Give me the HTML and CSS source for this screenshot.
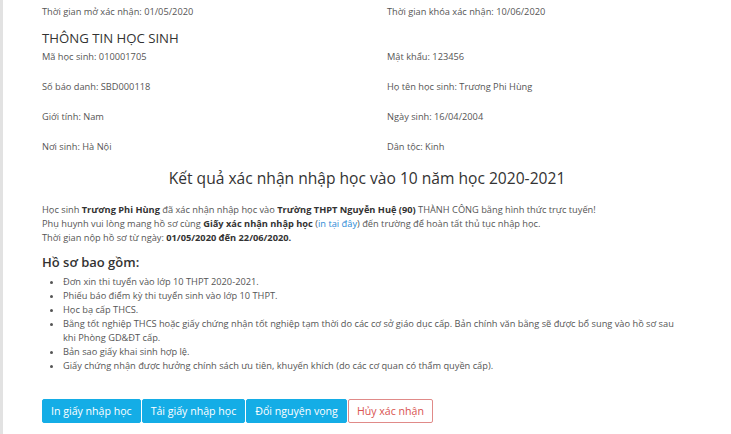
FILE: index.html
```html
<!DOCTYPE html>
<html lang="vi">
<head>
<meta charset="utf-8">
<title>Kết quả xác nhận nhập học</title>
<link rel="stylesheet" href="styles.css">
</head>
<body>
<div class="page">
  <div class="content">
    <div class="info">
      <div class="cell row-top">Thời gian mở xác nhận: 01/05/2020</div>
      <div class="cell row-top">Thời gian khóa xác nhận: 10/06/2020</div>
      <h2 class="section-title">THÔNG TIN HỌC SINH</h2>
      <div class="spacer"></div>
      <div class="cell">Mã học sinh: 010001705</div>
      <div class="cell">Mật khẩu: 123456</div>
      <div class="cell">Số báo danh: SBD000118</div>
      <div class="cell">Họ tên học sinh: Trương Phi Hùng</div>
      <div class="cell">Giới tính: Nam</div>
      <div class="cell">Ngày sinh: 16/04/2004</div>
      <div class="cell">Nơi sinh: Hà Nội</div>
      <div class="cell">Dân tộc: Kinh</div>
    </div>
    <h1 class="result-title">Kết quả xác nhận nhập học vào 10 năm học 2020-2021</h1>
    <div class="message">
      <p>Học sinh <b>Trương Phi Hùng</b> đã xác nhận nhập học vào <b>Trường THPT Nguyễn Huệ (90)</b> THÀNH CÔNG bằng hình thức trực tuyến!</p>
      <p>Phụ huynh vui lòng mang hồ sơ cùng <b>Giấy xác nhận nhập học</b> (<a href="#" class="link">in tại đây</a>) đến trường để hoàn tất thủ tục nhập học.</p>
      <p>Thời gian nộp hồ sơ từ ngày: <b>01/05/2020 đến 22/06/2020.</b></p>
    </div>
    <h3 class="docs-title">Hồ sơ bao gồm:</h3>
    <ul class="docs">
      <li>Đơn xin thi tuyển vào lớp 10 THPT 2020-2021.</li>
      <li>Phiếu báo điểm kỳ thi tuyển sinh vào lớp 10 THPT.</li>
      <li>Học bạ cấp THCS.</li>
      <li>Bằng tốt nghiệp THCS hoặc giấy chứng nhận tốt nghiệp tạm thời do các cơ sở giáo dục cấp. Bản chính văn bằng sẽ được bổ sung vào hồ sơ sau khi Phòng GD&amp;ĐT cấp.</li>
      <li>Bản sao giấy khai sinh hợp lệ.</li>
      <li>Giấy chứng nhận được hưởng chính sách ưu tiên, khuyến khích (do các cơ quan có thẩm quyền cấp).</li>
    </ul>
    <div class="actions">
      <button class="btn btn-info">In giấy nhập học</button>
      <button class="btn btn-info">Tải giấy nhập học</button>
      <button class="btn btn-info">Đổi nguyện vọng</button>
      <button class="btn btn-outline-danger">Hủy xác nhận</button>
    </div>
  </div>
</div>
</body>
</html>
```
FILE: styles.css
```css
* { box-sizing: border-box; }
html, body { margin: 0; padding: 0; }
body {
  font-family: "Open Sans", "Liberation Sans", sans-serif;
  font-size: 9.25px;
  color: #555;
  background: #fff;
}
.page {
  border-left: 3px solid #e2e2e2;
  min-height: 434px;
}
.content {
  padding: 5px 0 0 39px;
  width: 729px;
}
.info {
  display: grid;
  grid-template-columns: 345px 1fr;
}
.cell {
  height: 30px;
  line-height: 14px;
}
.cell.row-top { height: 22px; }
.spacer { height: 0; }
.section-title {
  margin: 0;
  font-size: 13.2px;
  font-weight: 400;
  color: #333;
  line-height: 23px;
  height: 23px;
}
.result-title {
  margin: -3px 0 0 0;
  width: 650px;
  text-align: center;
  font-size: 15.6px;
  font-weight: 400;
  color: #333;
  line-height: 22px;
  padding-bottom: 14px;
}
.message p { margin: 0; line-height: 14px; }
.message b { color: #333; }
.link { color: #2b8ad6; text-decoration: none; }
.docs-title {
  margin: 8px 0 4px;
  font-size: 13px;
  font-weight: 600;
  color: #333;
  line-height: 18px;
}
.docs {
  margin: 0;
  padding-left: 21px;
  line-height: 14px;
  width: 638px;
}
.actions {
  margin-top: 26px;
  display: flex;
  gap: 1px;
}
.btn {
  margin: 0;
  font-family: inherit;
  font-size: 10.6px;
  height: 24px;
  padding: 0 8px;
  border-radius: 2px;
  border: 1px solid transparent;
  cursor: pointer;
}
.btn-info { background: #14ade6; color: #fff; border-color: #14ade6; }
.btn-outline-danger { background: #fff; color: #d9534f; border-color: #e08a88; }
```
